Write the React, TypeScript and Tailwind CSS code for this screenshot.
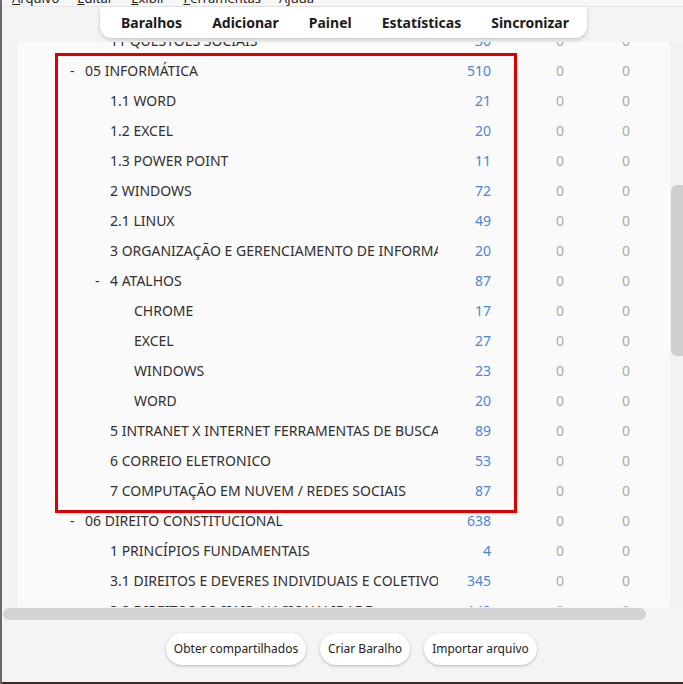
import React from 'react';

type Row = { name: string; count: number; level: 0 | 1 | 2; open?: boolean };

const rows: Row[] = [
  { name: '11 QUESTÕES SOCIAIS', count: 30, level: 1 },
  { name: '05 INFORMÁTICA', count: 510, level: 0, open: true },
  { name: '1.1 WORD', count: 21, level: 1 },
  { name: '1.2 EXCEL', count: 20, level: 1 },
  { name: '1.3 POWER POINT', count: 11, level: 1 },
  { name: '2 WINDOWS', count: 72, level: 1 },
  { name: '2.1 LINUX', count: 49, level: 1 },
  { name: '3 ORGANIZAÇÃO E GERENCIAMENTO DE INFORMAÇÕES', count: 20, level: 1 },
  { name: '4 ATALHOS', count: 87, level: 1, open: true },
  { name: 'CHROME', count: 17, level: 2 },
  { name: 'EXCEL', count: 27, level: 2 },
  { name: 'WINDOWS', count: 23, level: 2 },
  { name: 'WORD', count: 20, level: 2 },
  { name: '5 INTRANET X INTERNET FERRAMENTAS DE BUSCA', count: 89, level: 1 },
  { name: '6 CORREIO ELETRONICO', count: 53, level: 1 },
  { name: '7 COMPUTAÇÃO EM NUVEM / REDES SOCIAIS', count: 87, level: 1 },
  { name: '06 DIREITO CONSTITUCIONAL', count: 638, level: 0, open: true },
  { name: '1 PRINCÍPIOS FUNDAMENTAIS', count: 4, level: 1 },
  { name: '3.1 DIREITOS E DEVERES INDIVIDUAIS E COLETIVOS', count: 345, level: 1 },
  { name: '3.2 DIREITOS SOCIAIS, NACIONALIDADE', count: 143, level: 1 },
];

const DeckRow: React.FC<{ row: Row }> = ({ row }) => {
  // indentation per level, a collapse dash takes 15px before the name
  const pad =
    row.level === 0 ? 'pl-[53px]' : row.level === 1 ? (row.open ? 'pl-[78px]' : 'pl-[93px]') : 'pl-[117px]';
  return (
    <div className="flex h-[30px] items-center text-[14px]">
      <div className={`w-[421px] shrink-0 overflow-hidden whitespace-nowrap text-[#303030] ${pad}`}>
        {row.open && <span className="inline-block w-[15px]">-</span>}
        {row.name}
      </div>
      <div className="w-[53px] shrink-0 text-right text-[#4a86d6]">{row.count}</div>
      <div className="ml-[36px] w-[66px] shrink-0 text-center text-[#ababab]">0</div>
      <div className="w-[66px] shrink-0 text-center text-[#ababab]">0</div>
    </div>
  );
};

export default function App() {
  return (
    <div
      className="relative h-[684px] w-[683px] overflow-hidden border-l-2 border-[#6a6a6a] bg-[#f4f4f4]"
      style={{ fontFamily: '"Noto Sans", "Open Sans", sans-serif' }}
    >
      {/* menu bar, mostly scrolled off the top */}
      <div className="h-[7px] overflow-hidden border-b border-[#e6e6e6] bg-[#f7f7f7]">
        <div className="-mt-[11px] flex gap-[18px] pl-[10px] text-[13px] text-[#222]">
          <span><u>A</u>rquivo</span>
          <span><u>E</u>ditar</span>
          <span><u>E</u>xibir</span>
          <span><u>F</u>erramentas</span>
          <span>A<u>j</u>uda</span>
        </div>
      </div>

      {/* top toolbar */}
      <div className="absolute left-[98px] top-[7px] z-10 flex h-[31px] w-[487px] items-center gap-[30px] rounded-b-[12px] bg-white pl-[21px] text-[14px] font-bold text-[#1b1b1b] shadow-[0_2px_4px_rgba(0,0,0,0.18)]">
        <span>Baralhos</span>
        <span>Adicionar</span>
        <span>Painel</span>
        <span>Estatísticas</span>
        <span>Sincronizar</span>
      </div>

      <div className="h-[35px]" />

      <div className="flex h-[565px]">
        <div className="w-[15px] shrink-0 border-r border-[#ececec] bg-[#f3f3f3]" />
        <div className="relative flex-1 overflow-hidden bg-[#fafafa]">
          <div className="-mt-[17px]">
            {rows.map((r, i) => (
              <DeckRow key={i} row={r} />
            ))}
          </div>
        </div>
        <div className="w-[13px] shrink-0 bg-[#f2f2f2] pl-[1px]">
          <div className="mt-[143px] h-[171px] w-[12px] rounded-l-[6px] bg-[#cfcfcf]" />
        </div>
      </div>

      {/* horizontal scrollbar */}
      <div className="ml-[1px] mt-[1px] h-[12px] w-[643px] rounded-full bg-[#d4d4d4]" />

      {/* bottom buttons */}
      <div className="mt-[13px] flex gap-[14px] pl-[164px] text-[12px] text-[#222]">
        <button className="h-[32px] w-[140px] rounded-full bg-white shadow-[0_1px_3px_rgba(0,0,0,0.25)]">
          Obter compartilhados
        </button>
        <button className="h-[32px] w-[90px] rounded-full bg-white shadow-[0_1px_3px_rgba(0,0,0,0.25)]">
          Criar Baralho
        </button>
        <button className="h-[32px] w-[113px] rounded-full bg-white shadow-[0_1px_3px_rgba(0,0,0,0.25)]">
          Importar arquivo
        </button>
      </div>

      <div className="absolute bottom-0 left-0 h-[2px] w-full bg-[#3b2a22]" />

      {/* red highlight annotation */}
      <div className="pointer-events-none absolute left-[53px] top-[53px] h-[460px] w-[462px] border-[3px] border-[#dc0000]" />
    </div>
  );
}
